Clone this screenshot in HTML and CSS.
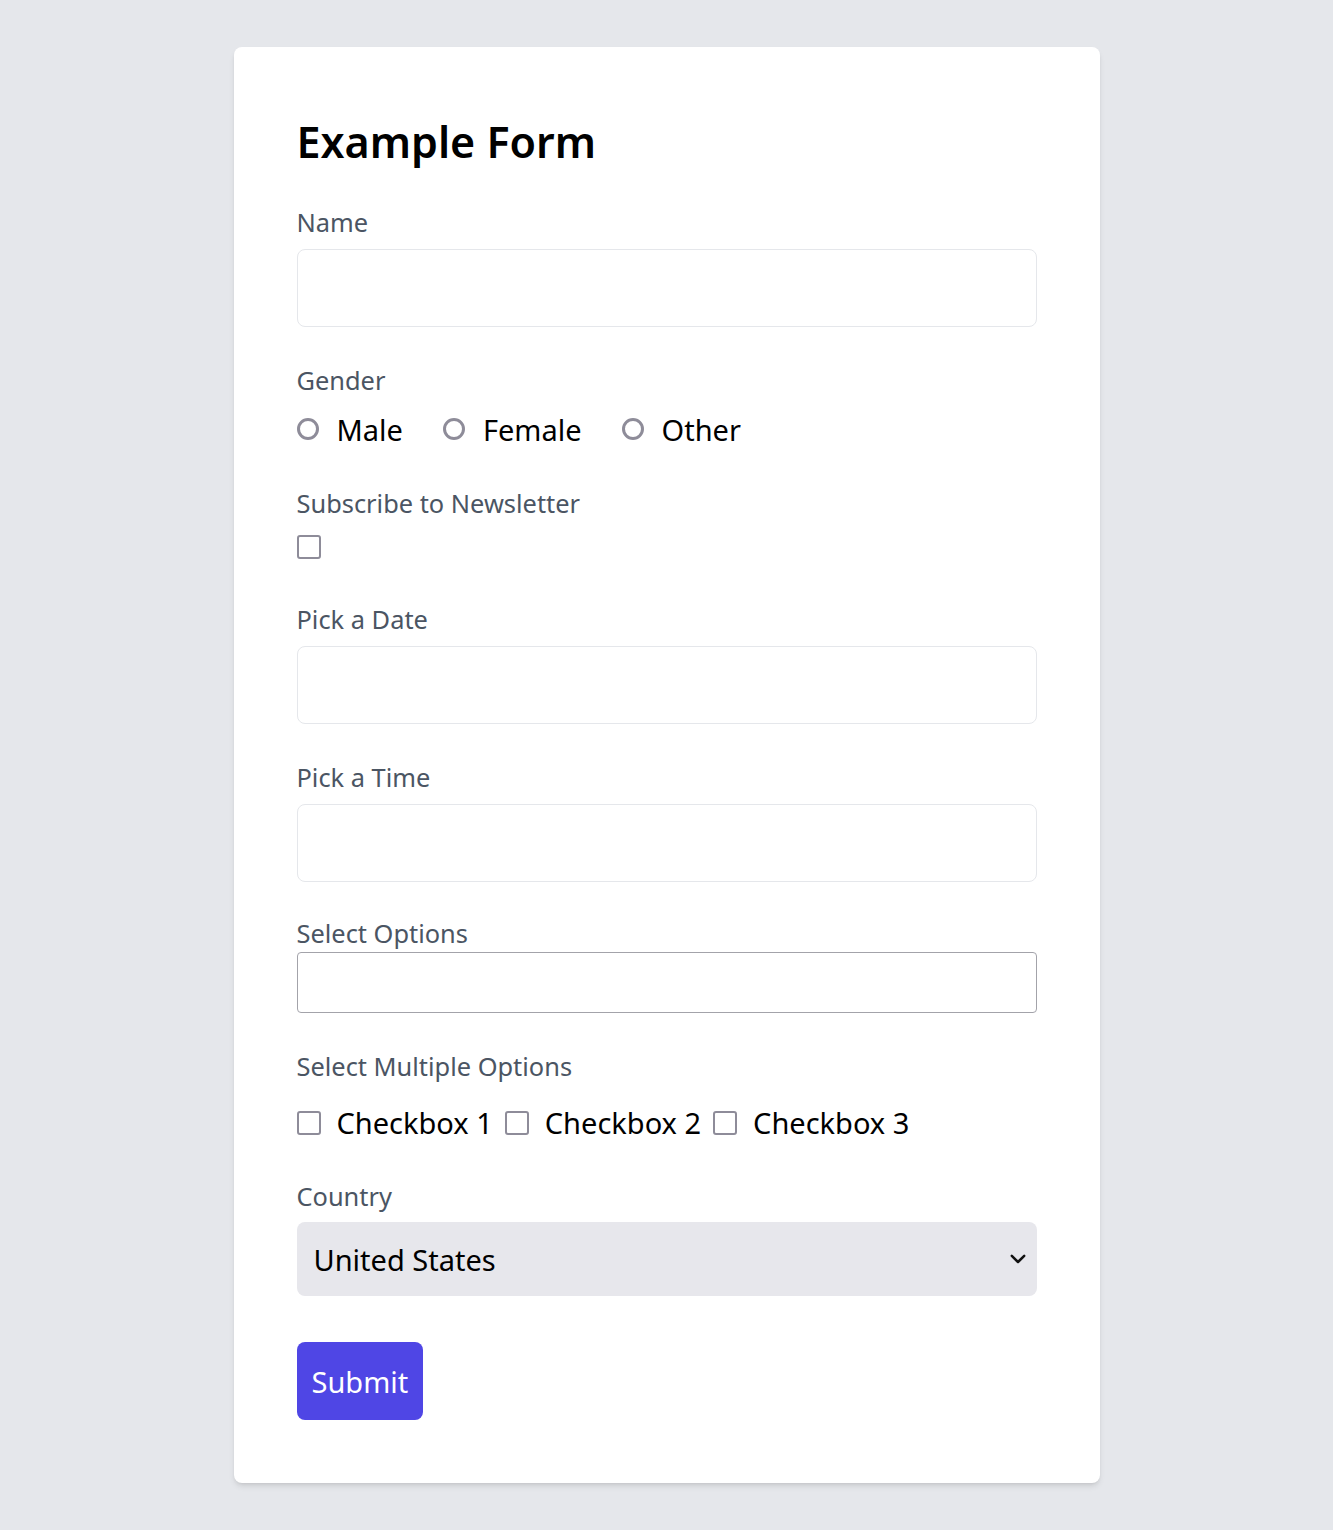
FILE: index.html
```html
<!DOCTYPE html>
<html lang="en">
<head>
<meta charset="utf-8">
<title>Example Form</title>
<link rel="stylesheet" href="styles.css">
</head>
<body>
<div class="card">
  <h1 class="title">Example Form</h1>

  <div class="field">
    <div class="label">Name</div>
    <div class="input"></div>
  </div>

  <div class="field">
    <div class="label">Gender</div>
    <div class="radios">
      <span class="opt"><span class="radio"></span><span class="opt-text">Male</span></span>
      <span class="opt"><span class="radio"></span><span class="opt-text">Female</span></span>
      <span class="opt"><span class="radio"></span><span class="opt-text">Other</span></span>
    </div>
  </div>

  <div class="field field-sub">
    <div class="label">Subscribe to Newsletter</div>
    <div class="single-check"><span class="checkbox"></span></div>
  </div>

  <div class="field">
    <div class="label">Pick a Date</div>
    <div class="input"></div>
  </div>

  <div class="field field-time">
    <div class="label">Pick a Time</div>
    <div class="input"></div>
  </div>

  <div class="field">
    <div class="label label-tight">Select Options</div>
    <div class="listbox"></div>
  </div>

  <div class="field">
    <div class="label">Select Multiple Options</div>
    <div class="checks">
      <span class="copt"><span class="checkbox"></span><span class="opt-text">Checkbox 1</span></span>
      <span class="copt"><span class="checkbox"></span><span class="opt-text">Checkbox 2</span></span>
      <span class="copt"><span class="checkbox"></span><span class="opt-text">Checkbox 3</span></span>
    </div>
  </div>

  <div class="field field-country">
    <div class="label">Country</div>
    <div class="select">
      <span class="select-text">United States</span>
      <svg class="chev" width="16" height="10" viewBox="0 0 16 10"><path d="M1.8 1.8 L8 8 L14.2 1.8" fill="none" stroke="#111" stroke-width="2.5" stroke-linecap="round" stroke-linejoin="round"/></svg>
    </div>
  </div>

  <div class="actions"><span class="submit">Submit</span></div>
</div>
</body>
</html>
```
FILE: styles.css
```css
html, body {
  margin: 0;
  padding: 0;
}
body {
  background: #e5e7eb;
  font-family: "Noto Sans", "Open Sans", sans-serif;
  padding: 47px 0 48px;
}
.card {
  width: 866px;
  box-sizing: border-box;
  margin: 0 auto;
  background: #fff;
  border-radius: 8px;
  box-shadow: 0 4px 6px -1px rgba(0,0,0,0.1), 0 2px 4px -2px rgba(0,0,0,0.1);
  padding: 67px 63px 63px;
}
.title {
  margin: 0 0 34px;
  font-size: 43px;
  line-height: 56px;
  font-weight: 600;
  color: #000;
}
.field {
  margin-bottom: 35px;
}
.field-time { margin-bottom: 33px; }
.label {
  font-size: 25.4px;
  line-height: 36px;
  color: #4b5563;
  margin-bottom: 9px;
}
.label-tight { margin-bottom: 1px; }
.input {
  height: 78px;
  box-sizing: border-box;
  border: 1px solid #e5e7eb;
  border-radius: 8px;
  background: #fff;
}
.listbox {
  height: 61px;
  box-sizing: border-box;
  border: 1px solid #a3a3aa;
  border-radius: 4px;
  background: #fff;
}
.radios {
  display: flex;
  align-items: center;
  gap: 40px;
  margin-top: 12px;
  height: 40px;
}
.opt, .copt {
  display: flex;
  align-items: center;
}
.opt-text {
  font-size: 29px;
  line-height: 40px;
  color: #000;
}
.radio {
  width: 22px;
  height: 22px;
  box-sizing: border-box;
  border: 3px solid #8e8c99;
  border-radius: 50%;
  margin-right: 18px;
  margin-top: -2px;
}
.checkbox {
  width: 24px;
  height: 24px;
  box-sizing: border-box;
  border: 2.8px solid #8e8c99;
  border-radius: 3px;
  display: block;
}
.single-check {
  padding-top: 5px;
  height: 24px;
}
.field-sub { margin-bottom: 42px; }
.checks {
  display: flex;
  align-items: center;
  gap: 12px;
  margin-top: 19px;
  height: 40px;
}
.copt .checkbox { margin-right: 16px; }
.field-country .label { margin-bottom: 8px; }
.field-country { margin-bottom: 46px; }
.select {
  height: 74px;
  box-sizing: border-box;
  background: #e7e7ec;
  border-radius: 8px;
  display: flex;
  align-items: center;
  justify-content: space-between;
  padding: 0 11px 0 17px;
}
.select-text {
  font-size: 29px;
  color: #000;
}
.chev { display: block; }
.actions { display: flex; }
.submit {
  display: inline-flex;
  align-items: center;
  height: 78px;
  padding: 0 15px;
  background: #4f46e5;
  color: #fff;
  border-radius: 8px;
  font-size: 29px;
}
```
